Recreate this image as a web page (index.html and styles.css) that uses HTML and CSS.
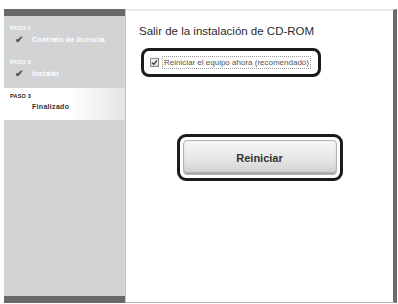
FILE: index.html
```html
<!DOCTYPE html>
<html lang="es">
<head>
    <meta charset="UTF-8">
    <title>Salir de la instalación de CD-ROM</title>
    <link rel="stylesheet" href="styles.css">
</head>
<body>
    <div class="window">
        <aside class="sidebar">
            <div class="bar"></div>
            <div class="step done">
                <div class="step-label">PASO 1</div>
                <div class="step-name"><span class="check">✔</span>Contrato de licencia</div>
            </div>
            <div class="step done">
                <div class="step-label">PASO 2</div>
                <div class="step-name"><span class="check">✔</span>Instalar</div>
            </div>
            <div class="step current">
                <div class="step-label">PASO 3</div>
                <div class="step-name"><span class="check"></span>Finalizado</div>
            </div>
            <div class="filler"></div>
            <div class="bar"></div>
        </aside>

        <main class="main">
            <h1 class="title">Salir de la instalación de CD-ROM</h1>
            <div class="option-ring">
                <label class="option">
                    <span class="box">
                        <svg width="7" height="7" viewBox="0 0 7 7"><path d="M1 3.6 L2.8 5.4 L6 1.4" fill="none" stroke="#333" stroke-width="1.3"/></svg>
                    </span>
                    <span class="option-text">Reiniciar el equipo ahora (recomendado)</span>
                </label>
            </div>
            <div class="action">
                <div class="btn-ring">
                    <button class="btn">Reiniciar</button>
                </div>
            </div>
        </main>
    </div>
</body>
</html>
```

FILE: styles.css
```css
* { box-sizing: border-box; }

body { margin: 0; background: white; font-family: 'Liberation Sans', Arial, sans-serif; }

.window { display: flex; height: 294px; margin: 9px 1px 0 4px; }

/* BARRA LATERAL */
.sidebar { width: 122px; background: #d2d3d5; display: flex; flex-direction: column; border-right: 1px solid #c4c5c7; }
.bar { height: 7px; background: #69696b; flex-shrink: 0; }
.filler { flex: 1; }

.step { padding: 9px 0 0 6px; height: 34px; }
.step-label { font-size: 5.5px; font-weight: 700; color: white; letter-spacing: 0.2px; }
.step-name { display: flex; align-items: center; margin-top: 3px; font-size: 7px; font-weight: 700; color: white; letter-spacing: 0.3px; }
.check { width: 22px; padding-left: 5px; font-size: 10px; color: #555; }

.step.current { background: linear-gradient(to right, #fff 55%, #e4e5e6); height: 32px; padding-top: 5px; margin-top: 4px; }
.step.current .step-label { color: #222; }
.step.current .step-name { color: #333; margin-top: 4px; }

/* CONTENIDO */
.main { flex: 1; background: white; border-top: 1px solid #e2e2e2; border-right: 4px solid #6a6a6a; border-bottom: 1px solid #b8b8b8; box-shadow: inset 0 2px 2px -1px #eee; padding: 15px 0 0 13px; }
.title { margin: 0; font-size: 11.5px; font-weight: 400; color: #2b2b2b; }

.option-ring { display: inline-flex; margin: 11px 0 0 2px; padding: 5px 7px 5px 6px; border: 3px solid #1b1b1b; border-radius: 8px; }
.option { display: flex; align-items: center; gap: 3px; }
.box { width: 9px; height: 9px; border: 1px solid #8a8a8a; background: linear-gradient(#f4f4f4, #d8d8d8); display: flex; align-items: center; justify-content: center; }
.option-text { font-size: 8px; color: #555; border: 1px dotted #999; padding: 1px 1px; }

.action { display: flex; justify-content: center; padding: 57px 13px 0 0; }
.btn-ring { padding: 3px; border: 3px solid #1b1b1b; border-radius: 9px; }
.btn { width: 154px; height: 35px; border: 1px solid #b5b5b5; border-radius: 4px; background: linear-gradient(#f7f7f7, #e6e6e6 55%, #cfcfcf); box-shadow: inset 0 -2px 1px #aaa; font-family: inherit; font-size: 11px; font-weight: 700; color: #333; }
```
